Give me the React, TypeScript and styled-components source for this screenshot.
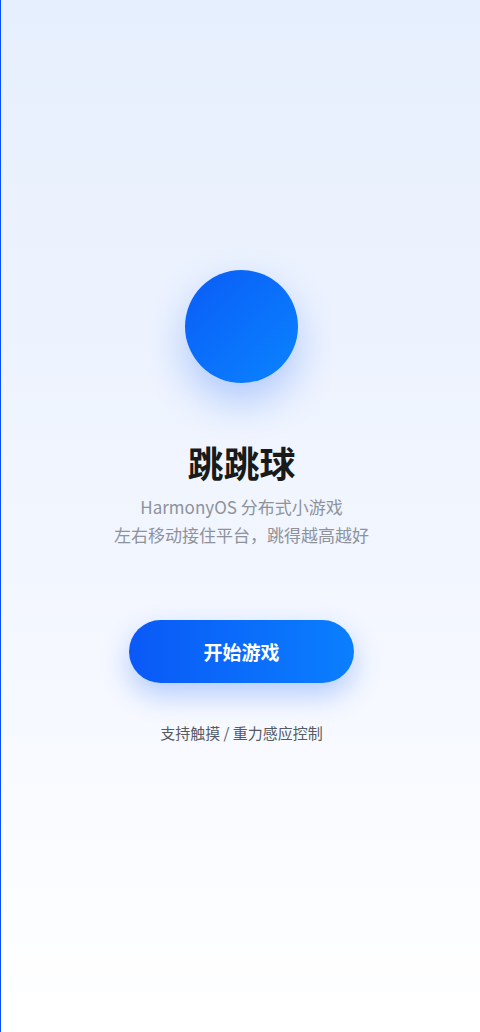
import React from "react";
import styled, { createGlobalStyle } from "styled-components";

//~~~~~~~~~~~~~~~~~~~Global
const GlobalStyle = createGlobalStyle`
  html, body {
    margin: 0;
    padding: 0;
  }
  body {
    font-family: "Noto Sans CJK SC", "Noto Sans", sans-serif;
  }
  * {
    box-sizing: border-box;
  }
`;

//~~~~~~~~~~~~~~~~~~~Styled Components
const Page = styled.main`
  width: 480px;
  min-height: 1032px;
  border-left: 1px solid #0a4ff5;
  padding-left: 2px;
  background: linear-gradient(180deg, #e6effd 0%, #f2f6ff 55%, #ffffff 100%);
  display: flex;
  flex-direction: column;
  align-items: center;
  justify-content: center;
  padding-bottom: 20px;
`;

const Ball = styled.div`
  width: 113px;
  height: 113px;
  border-radius: 50%;
  background: linear-gradient(135deg, #0a5cf7 0%, #0a84ff 100%);
  box-shadow: 0 18px 40px rgba(10, 89, 247, 0.28);
`;

const Title = styled.h1`
  margin: 58px 0 0;
  font-size: 36px;
  line-height: 43px;
  font-weight: 700;
  color: #1a1a1a;
`;

const Subtitle = styled.p`
  margin: 9px 0 0;
  font-size: 17px;
  line-height: 28px;
  color: #8d929b;
  text-align: center;
`;

const StartButton = styled.button`
  margin-top: 71px;
  width: 225px;
  height: 63px;
  border: none;
  border-radius: 32px;
  background: linear-gradient(90deg, #0a59f7 0%, #0a7ffe 100%);
  box-shadow: 0 12px 28px rgba(10, 89, 247, 0.28);
  color: #fff;
  font-family: inherit;
  font-size: 19px;
  font-weight: 700;
  cursor: pointer;
`;

const Hint = styled.p`
  margin: 40px 0 0;
  font-size: 15px;
  line-height: 20px;
  color: #555a63;
`;

//~~~~~~~~~~~~~~~~~~~Component
const App = (): JSX.Element => {
  return (
    <>
      <GlobalStyle />
      <Page>
        <Ball />
        <Title>跳跳球</Title>
        <Subtitle>
          HarmonyOS 分布式小游戏
          <br />
          左右移动接住平台，跳得越高越好
        </Subtitle>
        <StartButton>开始游戏</StartButton>
        <Hint>支持触摸 / 重力感应控制</Hint>
      </Page>
    </>
  );
};

export default App;
